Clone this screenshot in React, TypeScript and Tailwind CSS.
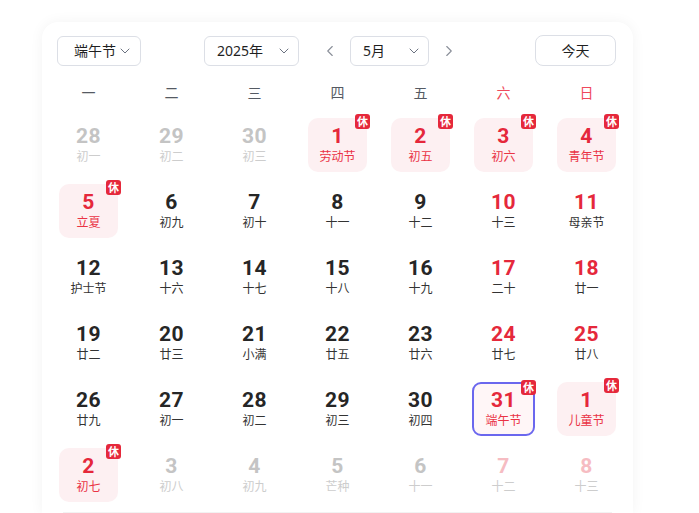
import { ChevronDown, ChevronLeft, ChevronRight } from "lucide-react";

type Day = {
    n: number;
    lunar: string;
    other?: boolean;
    rest?: boolean;
    selected?: boolean;
};

const weekdays = ["一", "二", "三", "四", "五", "六", "日"];

const rows: Day[][] = [
    [
        { n: 28, lunar: "初一", other: true },
        { n: 29, lunar: "初二", other: true },
        { n: 30, lunar: "初三", other: true },
        { n: 1, lunar: "劳动节", rest: true },
        { n: 2, lunar: "初五", rest: true },
        { n: 3, lunar: "初六", rest: true },
        { n: 4, lunar: "青年节", rest: true },
    ],
    [
        { n: 5, lunar: "立夏", rest: true },
        { n: 6, lunar: "初九" },
        { n: 7, lunar: "初十" },
        { n: 8, lunar: "十一" },
        { n: 9, lunar: "十二" },
        { n: 10, lunar: "十三" },
        { n: 11, lunar: "母亲节" },
    ],
    [
        { n: 12, lunar: "护士节" },
        { n: 13, lunar: "十六" },
        { n: 14, lunar: "十七" },
        { n: 15, lunar: "十八" },
        { n: 16, lunar: "十九" },
        { n: 17, lunar: "二十" },
        { n: 18, lunar: "廿一" },
    ],
    [
        { n: 19, lunar: "廿二" },
        { n: 20, lunar: "廿三" },
        { n: 21, lunar: "小满" },
        { n: 22, lunar: "廿五" },
        { n: 23, lunar: "廿六" },
        { n: 24, lunar: "廿七" },
        { n: 25, lunar: "廿八" },
    ],
    [
        { n: 26, lunar: "廿九" },
        { n: 27, lunar: "初一" },
        { n: 28, lunar: "初二" },
        { n: 29, lunar: "初三" },
        { n: 30, lunar: "初四" },
        { n: 31, lunar: "端午节", rest: true, selected: true },
        { n: 1, lunar: "儿童节", other: true, rest: true },
    ],
    [
        { n: 2, lunar: "初七", other: true, rest: true },
        { n: 3, lunar: "初八", other: true },
        { n: 4, lunar: "初九", other: true },
        { n: 5, lunar: "芒种", other: true },
        { n: 6, lunar: "十一", other: true },
        { n: 7, lunar: "十二", other: true },
        { n: 8, lunar: "十三", other: true },
    ],
];

const Select = ({ label, className }: { label: string; className: string }) => (
    <div className={"h-[30px] flex items-center justify-between border border-[#dcdfe6] rounded-[6px] bg-white text-[14px] text-[#1f1f1f] " + className}>
        <span>{label}</span>
        <ChevronDown size={16} strokeWidth={1.5} className="text-[#6b7280]" />
    </div>
);

const Cell = ({ d, weekend }: { d: Day; weekend: boolean }) => {
    let numColor = "text-[#262626]";
    let lunarColor = "text-[#333333]";
    if (d.rest) {
        numColor = "text-[#e5283b]";
        lunarColor = "text-[#ea3345]";
    } else if (d.other) {
        numColor = weekend ? "text-[#f6bcc2]" : "text-[#c4c4c4]";
        lunarColor = "text-[#cdcdcd]";
    } else if (weekend) {
        numColor = "text-[#e5283b]";
    }

    let box = "w-[59px] h-[54px] rounded-[10px]";
    if (d.selected) box = "w-[63px] h-[54px] rounded-[9px] border-2 border-[#6b67ee] bg-[#fff6f7]";
    else if (d.rest) box += " bg-[#fdf0f2]";

    return (
        <div className="h-[66px] flex items-center justify-center">
            <div className={"relative flex flex-col items-center justify-center gap-[1px] " + box}>
                <span className={"font-['Roboto',sans-serif] font-bold text-[21px] leading-[23px] tracking-[0.5px] " + numColor}>{d.n}</span>
                <span className={"text-[12px] leading-[16px] " + lunarColor}>{d.lunar}</span>
                {d.rest && (
                    <span className="absolute top-[-4px] right-[-3px] w-[15px] h-[15px] rounded-[3px] bg-[#e5283b] text-white text-[11px] leading-[15px] text-center font-bold">
                        休
                    </span>
                )}
            </div>
        </div>
    );
};

export default function App() {
    return (
        <div className="min-h-[513px] bg-white pt-[22px] pl-[42px] font-['Noto_Sans','Noto_Sans_CJK_SC',sans-serif]">
            <div className="w-[591px] bg-white rounded-t-[16px] shadow-[0_0_14px_rgba(0,0,0,0.05)] pt-[13px]">
                <div className="flex items-center pl-[15px] pr-[17px]">
                    <Select label="端午节" className="w-[84px] pl-[16px] pr-[7px]" />
                    <Select label="2025年" className="w-[95px] pl-[12px] pr-[6px] ml-[63px]" />
                    <ChevronLeft size={18} strokeWidth={1.5} className="text-[#8a8f99] ml-[22px]" />
                    <Select label="5月" className="w-[79px] pl-[12px] pr-[6px] ml-[11px]" />
                    <ChevronRight size={18} strokeWidth={1.5} className="text-[#8a8f99] ml-[11px]" />
                    <button className="ml-auto w-[81px] h-[31px] border border-[#dcdfe6] rounded-[8px] text-[14px] text-[#1f1f1f] bg-white">
                        今天
                    </button>
                </div>

                <div className="grid grid-cols-7 px-[5px] mt-[12px] h-[28px] items-center">
                    {weekdays.map((w, i) => (
                        <div key={w} className={"text-center text-[14px] " + (i >= 5 ? "text-[#ef4a5c]" : "text-[#555a63]")}>
                            {w}
                        </div>
                    ))}
                </div>

                <div className="grid grid-cols-7 px-[5px] mt-[6px]">
                    {rows.map((row, r) =>
                        row.map((d, i) => <Cell key={r + "-" + i} d={d} weekend={i >= 5} />)
                    )}
                </div>

                <div className="mx-[21px] mt-[4px] h-[2px] bg-[#f2f2f2]" />
            </div>
        </div>
    );
}
